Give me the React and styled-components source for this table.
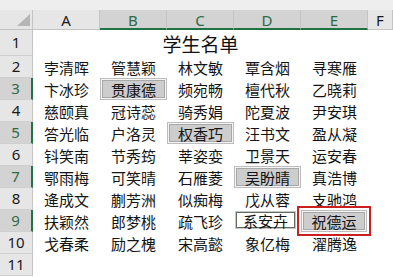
import React from "react";
import styled, { createGlobalStyle, css } from "styled-components";

const Global = createGlobalStyle`
  html, body { margin: 0; padding: 0; background: #ffffff; }
  body { font-family: "Noto Sans CJK SC", "Noto Sans", sans-serif; }
`;

const Page = styled.div`
  width: 393px;
  height: 277px;
  overflow: hidden;
  display: flex;
  flex-direction: column;
  background: #ffffff;
`;

const TopStrip = styled.div`
  height: 10px;
  background: #eeeeee;
  flex: none;
`;

const Sheet = styled.div`
  display: grid;
  grid-template-columns: 33px repeat(5, 67px) 1fr;
  grid-template-rows: 20px 26px repeat(10, 22px);
`;

const Corner = styled.div`
  background: #e6e6e6;
  border-right: 1px solid #c4c4c4;
  border-bottom: 1px solid #c4c4c4;
  display: flex;
  align-items: flex-end;
  justify-content: flex-end;
  padding: 0 2px 3px 0;
  box-sizing: border-box;
`;

const ColHead = styled.div`
  background: ${(p) => (p.$sel ? "#d3d3d3" : "#e6e6e6")};
  color: ${(p) => (p.$sel ? "#2d6a44" : "#1a1a1a")};
  border-right: 1px solid #c4c4c4;
  border-bottom: ${(p) => (p.$sel ? "2px solid #217346" : "1px solid #c4c4c4")};
  box-sizing: border-box;
  display: flex;
  align-items: center;
  justify-content: center;
  font-family: "Noto Sans", "Liberation Sans", sans-serif;
  font-size: 15px;
  line-height: 1;
  padding-top: 2px;
`;

const RowHead = styled.div`
  background: ${(p) => (p.$sel ? "#d3d3d3" : "#e6e6e6")};
  color: ${(p) => (p.$sel ? "#2d6a44" : "#1a1a1a")};
  border-right: ${(p) => (p.$sel ? "2px solid #217346" : "1px solid #c4c4c4")};
  border-bottom: 1px solid #d0d0d0;
  box-sizing: border-box;
  display: flex;
  align-items: center;
  justify-content: center;
  font-family: "Noto Sans", "Liberation Sans", sans-serif;
  font-size: 15px;
  line-height: 1;
`;

const Title = styled.div`
  grid-column: 2 / span 5;
  display: flex;
  align-items: center;
  justify-content: center;
  font-size: 19px;
  color: #111111;
  padding-top: 1px;
`;

const Cell = styled.div`
  display: flex;
  align-items: stretch;
  justify-content: stretch;
  min-width: 0;
`;

const variants = {
  plain: css`
    border: 1px solid transparent;
  `,
  shade: css`
    margin: 0 0 0 0;
    background: #cdcdcd;
    border: 1px solid #bdbdbd;
    box-shadow: inset 0 0 0 1px #f4f4f4, inset 0 0 0 2px #a8a8a8;
  `,
  active: css`
    margin: 1px 5px 3px 1px;
    background: #ffffff;
    border: 1px solid #c8c8c8;
    box-shadow: inset 0 0 0 1px #5e6b5e;
  `,
  flagged: css`
    margin: 0 1px 0 0;
    background: #cdcdcd;
    border: 1px solid #bdbdbd;
    box-shadow: inset 0 0 0 1px #f4f4f4, inset 0 0 0 2px #a8a8a8;
    outline: 2px solid #cc1f1f;
    outline-offset: 2px;
  `,
};

const NameBox = styled.div`
  flex: 1;
  display: flex;
  align-items: center;
  justify-content: center;
  font-size: 15px;
  color: #141414;
  white-space: nowrap;
  box-sizing: border-box;
  ${(p) => variants[p.$v || "plain"]}
`;

const cols = ["A", "B", "C", "D", "E", "F"];
const selCols = { B: true, C: true, D: true, E: true };
const selRows = { 3: true, 5: true, 7: true, 9: true };

const data = [
  ["孛清晖", "管慧颖", "林文敏", "覃含烟", "寻寒雁"],
  ["卞冰珍", "贯康德", "频宛畅", "檀代秋", "乙晓莉"],
  ["慈颐真", "冠诗蕊", "骑秀娟", "陀夏波", "尹安琪"],
  ["答光临", "户洛灵", "权香巧", "汪书文", "盈从凝"],
  ["钭笑南", "节秀筠", "莘姿娈", "卫景天", "运安春"],
  ["鄂雨梅", "可笑晴", "石雁菱", "吴盼晴", "真浩博"],
  ["逄成文", "蒯芳洲", "似痴梅", "戊从蓉", "支驰鸿"],
  ["扶颖然", "郎梦桃", "疏飞珍", "系安卉", "祝德运"],
  ["戈春柔", "励之槐", "宋高懿", "象亿梅", "濯腾逸"],
];

const marks = {
  "3-1": "shade",
  "5-2": "shade",
  "7-3": "shade",
  "9-3": "active",
  "9-4": "flagged",
};

export default function App() {
  return (
    <Page>
      <Global />
      <TopStrip />
      <Sheet>
        <Corner>
          <svg width="13" height="12" viewBox="0 0 13 12">
            <polygon points="13,0 13,12 0,12" fill="#b5b5b5" />
          </svg>
        </Corner>
        {cols.map((c) => (
          <ColHead key={c} $sel={!!selCols[c]}>
            {c}
          </ColHead>
        ))}

        <RowHead>1</RowHead>
        <Title>学生名单</Title>
        <Cell />

        {data.map((row, i) => {
          const r = i + 2;
          return (
            <React.Fragment key={r}>
              <RowHead $sel={!!selRows[r]}>{r}</RowHead>
              {row.map((name, j) => (
                <Cell key={j}>
                  <NameBox $v={marks[`${r}-${j}`]}>{name}</NameBox>
                </Cell>
              ))}
              <Cell />
            </React.Fragment>
          );
        })}

        <RowHead>11</RowHead>
        {cols.map((c) => (
          <Cell key={c} />
        ))}
      </Sheet>
    </Page>
  );
}
